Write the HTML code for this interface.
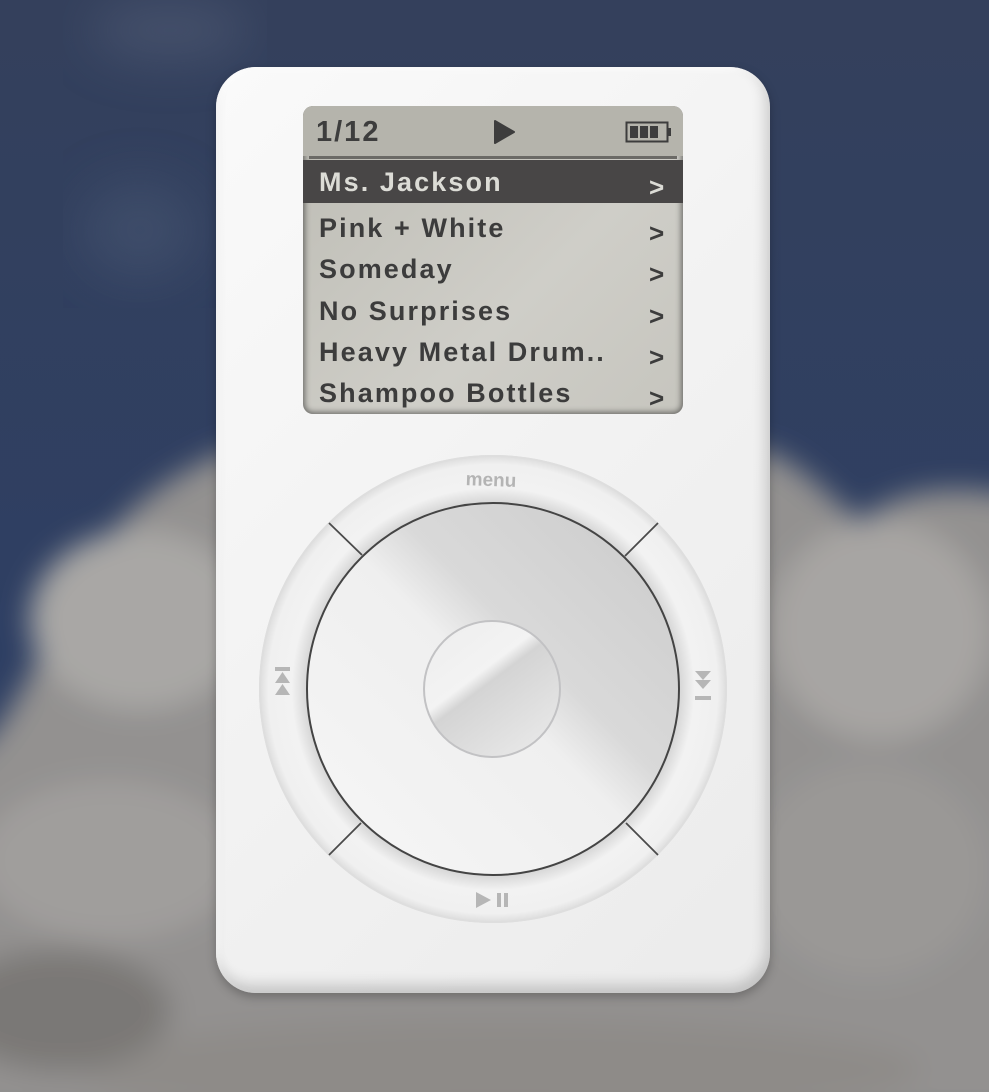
<!DOCTYPE html>
<html><head><style>
html,body{margin:0;padding:0;width:989px;height:1092px;overflow:hidden;}
body{position:relative;background:#2f3e5f;font-family:"Liberation Sans",sans-serif;}
#bg{position:absolute;left:0;top:0}
.ipod{position:absolute;left:216px;top:67px;width:554px;height:926px;border-radius:40px;
background:linear-gradient(135deg,#fafafa 0%,#f2f2f2 50%,#ebebeb 100%);
box-shadow:inset -4px -8px 14px rgba(0,0,0,0.18),inset 3px 3px 6px rgba(255,255,255,0.9),0 4px 10px rgba(0,0,0,0.25);}
.screen{position:absolute;left:303px;top:106px;width:380px;height:308px;border-radius:10px;overflow:hidden;
background:linear-gradient(135deg,#bdbcb4,#cfcec8 60%,#c6c5be);
box-shadow:inset 0 0 6px 2px rgba(0,0,0,0.45);}
.hdr{position:absolute;left:0;top:0;width:380px;height:50px;background:#b5b4ac;}
.hdr .n{position:absolute;left:13px;top:10px;font-size:29px;font-weight:bold;color:#3d3d3d;letter-spacing:2px}
.div{position:absolute;left:6px;top:50px;width:368px;height:3px;background:#6b6a66}
.row{position:absolute;left:0;width:380px;height:42px;font-size:27px;font-weight:bold;color:#3c3c3c;letter-spacing:2.1px}
.row span{position:absolute;left:16px;top:7px}
.row i{position:absolute;left:346px;top:12px;font-style:normal;font-size:26px}
.sel{background:#484646;color:#dcdcd6}
</style></head><body>
<svg id="bg" width="989" height="1092">
<defs>
<linearGradient id="sky" x1="0" y1="0" x2="0" y2="1"><stop offset="0" stop-color="#34405c"/><stop offset="0.6" stop-color="#2e3f63"/><stop offset="1" stop-color="#2b3c60"/></linearGradient>
<filter id="bl"><feGaussianBlur stdDeviation="14"/></filter>
<filter id="bl2"><feGaussianBlur stdDeviation="25"/></filter>
</defs>
<rect width="989" height="1092" fill="url(#sky)"/>
<g filter="url(#bl2)" opacity="0.5">
<ellipse cx="170" cy="30" rx="80" ry="30" fill="#56627a"/>
<ellipse cx="140" cy="230" rx="60" ry="50" fill="#4a5873"/>
</g>
<g filter="url(#bl)">
<path d="M-40 760 C10 740 40 640 90 560 C130 500 180 470 230 450 L760 450 C800 460 830 500 860 520 C900 490 950 480 1030 500 L1030 1120 L-40 1120 Z" fill="#939190"/>
<ellipse cx="140" cy="620" rx="110" ry="90" fill="#a9a7a5"/>
<ellipse cx="880" cy="630" rx="110" ry="110" fill="#a7a5a3"/>
<ellipse cx="110" cy="860" rx="130" ry="80" fill="#a09e9c"/>
<ellipse cx="870" cy="870" rx="120" ry="110" fill="#9a9896"/>
<ellipse cx="500" cy="1070" rx="420" ry="50" fill="#8e8b88"/>
<ellipse cx="60" cy="1010" rx="110" ry="60" fill="#7a7876"/>
</g>
</svg>
<div class="ipod"></div>
<div class="screen">
<div class="hdr"><div class="n">1/12</div>
<svg style="position:absolute;left:190px;top:14px" width="24" height="24"><path d="M2 1 L21 12 L2 23 Z" fill="#3d3d3d" stroke="#3d3d3d" stroke-linejoin="round" stroke-width="2"/></svg>
<svg style="position:absolute;left:322px;top:14px" width="48" height="24"><rect x="1.5" y="2.5" width="41" height="19" fill="none" stroke="#3d3d3d" stroke-width="2"/><rect x="43" y="8" width="3" height="8" fill="#3d3d3d"/><rect x="5" y="6" width="8" height="12" fill="#3d3d3d"/><rect x="15" y="6" width="8" height="12" fill="#3d3d3d"/><rect x="25" y="6" width="8" height="12" fill="#3d3d3d"/></svg>
</div>
<div class="div"></div>
<div class="row sel" style="top:54px;height:43px"><span>Ms. Jackson</span><i>&gt;</i></div>
<div class="row" style="top:100px"><span>Pink + White</span><i>&gt;</i></div>
<div class="row" style="top:141px"><span>Someday</span><i>&gt;</i></div>
<div class="row" style="top:183px"><span>No Surprises</span><i>&gt;</i></div>
<div class="row" style="top:224px"><span>Heavy Metal Drum..</span><i>&gt;</i></div>
<div class="row" style="top:265px"><span>Shampoo Bottles</span><i>&gt;</i></div>
</div>
<svg style="position:absolute;left:0;top:0" width="989" height="1092">
<defs>
<radialGradient id="ring" cx="0.5" cy="0.5" r="0.5"><stop offset="0.8" stop-color="#d8d8d8"/><stop offset="0.86" stop-color="#f2f2f2"/><stop offset="0.96" stop-color="#f0f0f0"/><stop offset="1" stop-color="#dcdcdc"/></radialGradient>
<linearGradient id="pad" x1="0.15" y1="0.85" x2="0.85" y2="0.15"><stop offset="0" stop-color="#f4f4f4"/><stop offset="0.5" stop-color="#efefef"/><stop offset="0.65" stop-color="#d9d9d9"/><stop offset="1" stop-color="#d0d0d0"/></linearGradient>
<linearGradient id="btn" x1="0.2" y1="0.1" x2="0.8" y2="0.9"><stop offset="0" stop-color="#efefef"/><stop offset="0.35" stop-color="#f3f3f3"/><stop offset="0.45" stop-color="#d4d4d4"/><stop offset="1" stop-color="#e6e6e6"/></linearGradient>
</defs>
<circle cx="493" cy="689" r="234" fill="url(#ring)"/>
<circle cx="493" cy="689" r="233" fill="none" stroke="#dedede" stroke-width="2"/>
<g stroke="#4a4a4a" stroke-width="1.8">
<line x1="329" y1="523" x2="362" y2="555"/>
<line x1="658" y1="523" x2="625" y2="556"/>
<line x1="329" y1="855" x2="361" y2="823"/>
<line x1="658" y1="855" x2="626" y2="823"/>
</g>
<circle cx="493" cy="689" r="186" fill="url(#pad)" stroke="#444" stroke-width="2"/>
<circle cx="492" cy="689" r="68" fill="url(#btn)" stroke="#c2c2c4" stroke-width="2"/>
<text x="491" y="486" font-family="Liberation Sans,sans-serif" font-weight="bold" font-size="19" fill="#b4b4b4" text-anchor="middle" transform="rotate(2 491 480)">menu</text>
<g fill="#b6b6b6">
<path d="M476 892 L491 900 L476 908 Z"/><rect x="497" y="893" width="4" height="14"/><rect x="504" y="893" width="4" height="14"/>
<rect x="275" y="667" width="15" height="4"/><path d="M282.5 672 L290 683 L275 683 Z"/><path d="M282.5 684 L290 695 L275 695 Z"/>
<rect x="695" y="696" width="16" height="4"/><path d="M695 671 L711 671 L703 680 Z"/><path d="M695 680 L711 680 L703 689 Z"/>
</g>
</svg>
</body></html>
